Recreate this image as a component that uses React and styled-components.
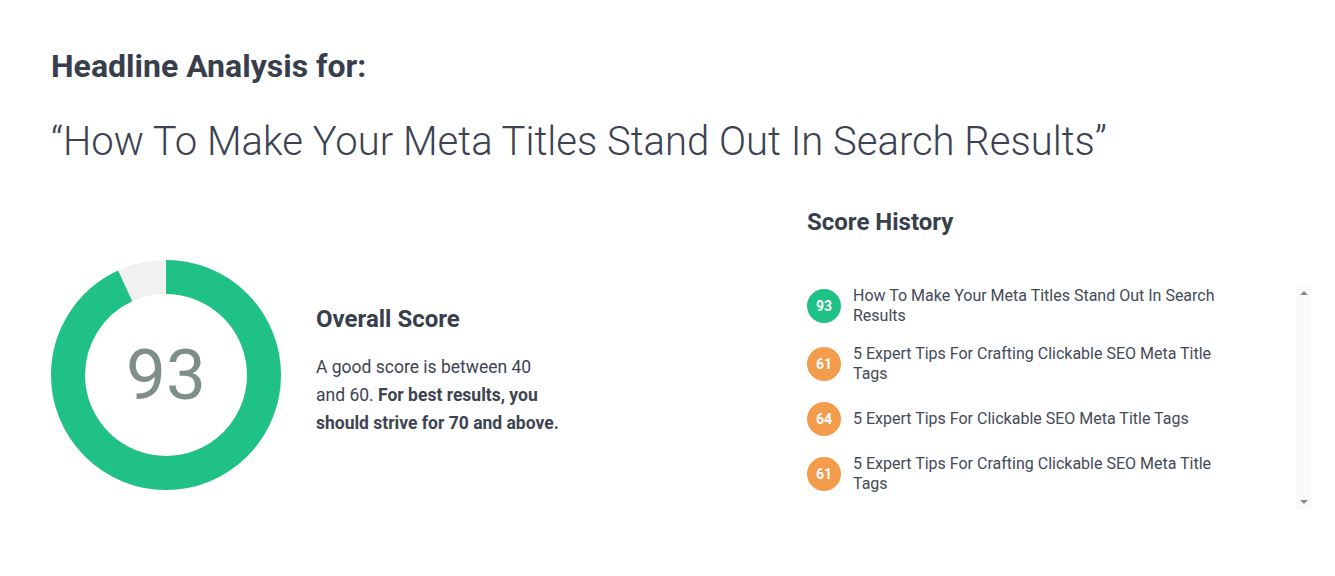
import React from 'react';
import styled, { createGlobalStyle } from 'styled-components';

const GlobalStyle = createGlobalStyle`
  body {
    margin: 0;
    background: #ffffff;
    font-family: Roboto, "Liberation Sans", sans-serif;
    color: #383f4d;
  }
`;

const Page = styled.div`
  padding: 48px 51px 0 51px;
`;

const Title = styled.h1`
  margin: 0;
  font-size: 32px;
  line-height: 36px;
  font-weight: 700;
  color: #373e4c;
`;

const Headline = styled.h2`
  margin: 35px 0 0 0;
  font-size: 40px;
  line-height: 46px;
  font-weight: 300;
  color: #3b4252;
`;

const Columns = styled.div`
  display: grid;
  grid-template-columns: 756px 504px;
  margin-top: 43px;
`;

const ScoreBlock = styled.div`
  display: flex;
  align-items: center;
  gap: 35px;
  margin-top: 31px;
`;

const Donut = styled.div`
  position: relative;
  width: 230px;
  height: 230px;
  flex-shrink: 0;
`;

const DonutValue = styled.div`
  position: absolute;
  inset: 0;
  display: flex;
  align-items: center;
  justify-content: center;
  font-size: 71px;
  font-weight: 400;
  color: #7f8e8b;
`;

const ScoreText = styled.div`
  width: 246px;
  margin-top: -8px;
`;

const SectionTitle = styled.h3`
  margin: 0;
  font-size: 24px;
  line-height: 28px;
  font-weight: 700;
  color: #373e4c;
`;

const Para = styled.p`
  margin: 20px 0 0 0;
  font-size: 17.5px;
  line-height: 28px;
  color: #3d4451;
  strong { font-weight: 700; }
`;

const History = styled.div`
  display: flex;
  flex-direction: column;
`;

const ListWrap = styled.div`
  display: flex;
  margin-top: 49px;
  height: 225px;
`;

const List = styled.div`
  flex: 1;
  display: flex;
  flex-direction: column;
  gap: 18px;
  padding-top: 1px;
`;

const Item = styled.div`
  display: flex;
  align-items: center;
  gap: 12px;
`;

const Badge = styled.div`
  width: 34px;
  height: 34px;
  border-radius: 50%;
  flex-shrink: 0;
  background: ${p => (p.$good ? '#20c186' : '#f39c4b')};
  color: #fff;
  font-size: 14px;
  font-weight: 700;
  display: flex;
  align-items: center;
  justify-content: center;
`;

const ItemText = styled.div`
  width: 372px;
  font-size: 16px;
  line-height: 20px;
  color: #434a57;
`;

const Scrollbar = styled.div`
  width: 15px;
  background: #fafafa;
  display: flex;
  flex-direction: column;
  justify-content: space-between;
  align-items: center;
  padding: 6px 0;
`;

const Arrow = styled.div`
  width: 0;
  height: 0;
  border-left: 4px solid transparent;
  border-right: 4px solid transparent;
  ${p => (p.$down ? 'border-top: 4px solid #8a8a8a;' : 'border-bottom: 4px solid #8a8a8a;')}
`;

const history = [
  { score: 93, text: 'How To Make Your Meta Titles Stand Out In Search Results' },
  { score: 61, text: '5 Expert Tips For Crafting Clickable SEO Meta Title Tags' },
  { score: 64, text: '5 Expert Tips For Clickable SEO Meta Title Tags' },
  { score: 61, text: '5 Expert Tips For Crafting Clickable SEO Meta Title Tags' },
];

function Ring({ value }) {
  const r = 98;
  const c = 2 * Math.PI * r;
  const filled = (value / 100) * c;
  return (
    <svg width="230" height="230" viewBox="0 0 230 230">
      <circle cx="115" cy="115" r={r} fill="none" stroke="#f1f1f1" strokeWidth="34" />
      <circle
        cx="115"
        cy="115"
        r={r}
        fill="none"
        stroke="#20c186"
        strokeWidth="34"
        strokeDasharray={`${filled} ${c}`}
        transform="rotate(-90 115 115)"
      />
    </svg>
  );
}

export default function App() {
  return (
    <Page>
      <GlobalStyle />
      <Title>Headline Analysis for:</Title>
      <Headline>“How To Make Your Meta Titles Stand Out In Search Results”</Headline>
      <Columns>
        <ScoreBlock>
          <Donut>
            <Ring value={93} />
            <DonutValue>93</DonutValue>
          </Donut>
          <ScoreText>
            <SectionTitle>Overall Score</SectionTitle>
            <Para>
              A good score is between 40 and 60. <strong>For best results, you should strive for 70 and above.</strong>
            </Para>
          </ScoreText>
        </ScoreBlock>
        <History>
          <SectionTitle>Score History</SectionTitle>
          <ListWrap>
            <List>
              {history.map((h, i) => (
                <Item key={i}>
                  <Badge $good={h.score >= 70}>{h.score}</Badge>
                  <ItemText>{h.text}</ItemText>
                </Item>
              ))}
            </List>
            <Scrollbar>
              <Arrow />
              <Arrow $down />
            </Scrollbar>
          </ListWrap>
        </History>
      </Columns>
    </Page>
  );
}
